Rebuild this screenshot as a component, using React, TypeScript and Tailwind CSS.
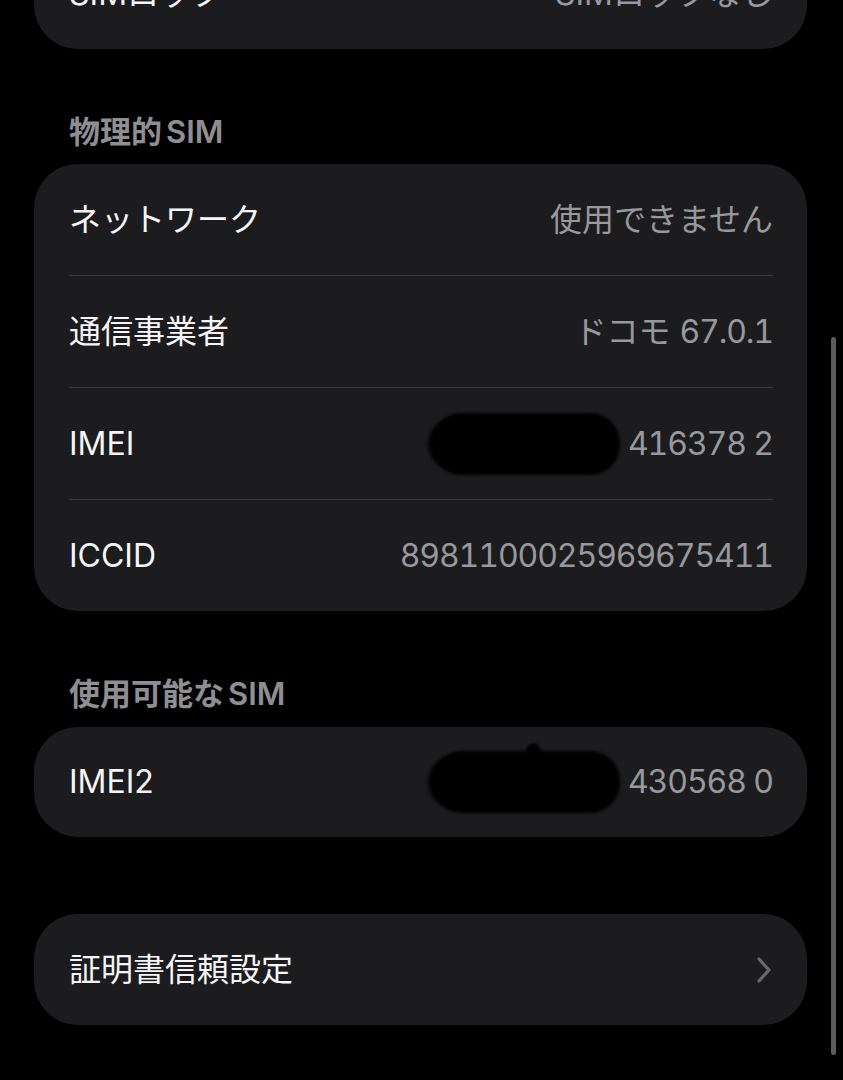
import React from "react";

const font = { fontFamily: 'Inter, "Noto Sans CJK JP", "Noto Sans", sans-serif' };

function Row({ label, value, last, children }: { label: string; value?: React.ReactNode; last?: boolean; children?: React.ReactNode }) {
  return (
    <div className="flex flex-col">
      <div className="flex h-[111px] items-center justify-between pl-[35px] pr-[34px]">
        <span className="text-[32px] leading-none text-[#f5f5f7]">{label}</span>
        <div className="flex items-center">
          {children}
          {value && <span className="text-[32px] leading-none text-[#98989d]">{value}</span>}
        </div>
      </div>
      {!last && <div className="ml-[35px] mr-[34px] h-px bg-[#3a3a3d]" />}
    </div>
  );
}

function Num({ children }: { children: React.ReactNode }) {
  return <span className="tabular-nums tracking-[-1.1px]">{children}</span>;
}

function Blob({ spike }: { spike?: boolean }) {
  return (
    <div className="relative mr-[8px] h-[62px] w-[188px]">
      <div className="absolute inset-0 rounded-[30px] bg-black blur-[1.5px]" />
      <div className="absolute left-[-4px] top-[6px] h-[50px] w-[60px] rounded-full bg-black blur-[2px]" />
      {spike && <div className="absolute left-[96px] top-[-8px] h-[24px] w-[14px] -rotate-[20deg] rounded-t-full bg-black blur-[1px]" />}
    </div>
  );
}

function Header({ jp, className }: { jp: string; className: string }) {
  return (
    <div className={`pl-[35px] text-[31px] font-semibold leading-[36px] text-[#8e8e93] ${className}`}>
      {jp}
      <span className="ml-[4px]">SIM</span>
    </div>
  );
}

export default function App() {
  return (
    <div className="relative min-h-[1080px] w-full overflow-hidden bg-black" style={font}>
      <div className="flex flex-col pb-[54px] pl-[34px] pr-[36px]">
        <div className="-mt-[62px] overflow-hidden rounded-[44px] bg-[#1c1c1e]">
          <Row label="SIMロック" value="SIMロックなし" last />
        </div>

        <Header jp="物理的" className="mt-[65px] mb-[14px]" />
        <div className="overflow-hidden rounded-[44px] bg-[#1c1c1e]">
          <Row label="ネットワーク" value="使用できません" />
          <Row label="通信事業者" value={<>ドコモ <Num>67.0.1</Num></>} />
          <Row label="IMEI" value={<Num>416378 2</Num>}>
            <Blob />
          </Row>
          <Row label="ICCID" value={<Num>8981100025969675411</Num>} last />
        </div>

        <Header jp="使用可能な" className="mt-[65px] mb-[15px]" />
        <div className="overflow-hidden rounded-[44px] bg-[#1c1c1e]">
          <div className="flex h-[110px] items-center justify-between pl-[35px] pr-[34px]">
            <span className="text-[32px] leading-none text-[#f5f5f7]">IMEI2</span>
            <div className="flex items-center">
              <Blob spike />
              <span className="text-[32px] leading-none text-[#98989d]">
                <Num>430568 0</Num>
              </span>
            </div>
          </div>
        </div>

        <div className="mt-[77px] overflow-hidden rounded-[44px] bg-[#1c1c1e]">
          <div className="flex h-[111px] items-center justify-between pl-[35px] pr-[34px]">
            <span className="text-[32px] leading-none text-[#f5f5f7]">証明書信頼設定</span>
            <svg width="18" height="28" viewBox="0 0 18 28">
              <path d="M4 3 L14 14 L4 25" fill="none" stroke="#68686d" strokeWidth="3.2" strokeLinecap="round" strokeLinejoin="round" />
            </svg>
          </div>
        </div>
      </div>

      <div className="absolute right-[7px] top-[337px] h-[718px] w-[5px] rounded-full bg-[#5c5c5f]" />
    </div>
  );
}
